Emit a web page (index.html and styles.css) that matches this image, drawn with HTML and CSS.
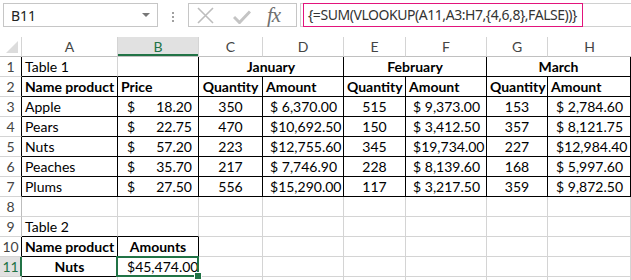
FILE: index.html
```html
<!DOCTYPE html>
<html lang="en">
<head>
    <meta charset="UTF-8">
    <title>VLOOKUP array formula</title>
    <link rel="stylesheet" href="styles.css">
</head>
<body>
    <div class="topbar">
        <div class="namebox"><span>B11</span><i class="caret"></i></div>
        <div class="dots"><i></i><i></i><i></i></div>
        <div class="fbtns">
            <svg class="ic-x" width="17" height="17" viewBox="0 0 17 17"><path d="M1 1L16 16M16 1L1 16" stroke="#bdbdbd" stroke-width="1.6" fill="none"/></svg>
            <svg class="ic-ok" width="18" height="14" viewBox="0 0 18 14"><path d="M1 7L6.5 12.5L17 1.5" stroke="#c4c4c4" stroke-width="3" fill="none"/></svg>
            <span class="fx">fx</span>
        </div>
        <div class="fbar">
            <div class="formula">{=SUM(VLOOKUP(A11,A3:H7,{4,6,8},FALSE))}</div>
        </div>
    </div>

    <table class="sheet">
        <colgroup>
            <col class="w-rh"><col class="w-a"><col class="w-b"><col class="w-c"><col class="w-d">
            <col class="w-e"><col class="w-f"><col class="w-g"><col class="w-h">
        </colgroup>
        <thead>
            <tr>
                <th class="corner"><i></i></th>
                <th>A</th><th class="on">B</th><th>C</th><th>D</th><th>E</th><th>F</th><th>G</th><th>H</th>
            </tr>
        </thead>
        <tbody>
            <tr>
                <th class="rh k">1</th>
                <td class="kb">Table 1</td><td class="k"></td>
                <td colspan="2" class="k bold mid">January</td>
                <td colspan="2" class="k bold mid">February</td>
                <td colspan="2" class="k bold mid">March</td>
            </tr>
            <tr>
                <th class="rh k">2</th>
                <td class="k bold">Name product</td><td class="k bold">Price</td>
                <td class="k bold mid">Quantity</td><td class="k bold">Amount</td>
                <td class="k bold mid">Quantity</td><td class="k bold">Amount</td>
                <td class="k bold mid">Quantity</td><td class="k bold">Amount</td>
            </tr>
            <tr>
                <th class="rh k">3</th>
                <td class="k">Apple</td>
                <td class="k acc pb"><div><span>$</span><span>18.20</span></div></td>
                <td class="k mid">350</td>
                <td class="k acc"><div><span>$</span><span>6,370.00</span></div></td>
                <td class="k mid">515</td>
                <td class="k acc"><div><span>$</span><span>9,373.00</span></div></td>
                <td class="k mid">153</td>
                <td class="k acc ph"><div><span>$</span><span>2,784.60</span></div></td>
            </tr>
            <tr>
                <th class="rh k">4</th>
                <td class="k">Pears</td>
                <td class="k acc pb"><div><span>$</span><span>22.75</span></div></td>
                <td class="k mid">470</td>
                <td class="k acc"><div><span>$</span><span>10,692.50</span></div></td>
                <td class="k mid">150</td>
                <td class="k acc"><div><span>$</span><span>3,412.50</span></div></td>
                <td class="k mid">357</td>
                <td class="k acc ph"><div><span>$</span><span>8,121.75</span></div></td>
            </tr>
            <tr>
                <th class="rh k">5</th>
                <td class="k">Nuts</td>
                <td class="k acc pb"><div><span>$</span><span>57.20</span></div></td>
                <td class="k mid">223</td>
                <td class="k acc"><div><span>$</span><span>12,755.60</span></div></td>
                <td class="k mid">345</td>
                <td class="k acc"><div><span>$</span><span>19,734.00</span></div></td>
                <td class="k mid">227</td>
                <td class="k acc ph"><div><span>$</span><span>12,984.40</span></div></td>
            </tr>
            <tr>
                <th class="rh k">6</th>
                <td class="k">Peaches</td>
                <td class="k acc pb"><div><span>$</span><span>35.70</span></div></td>
                <td class="k mid">217</td>
                <td class="k acc"><div><span>$</span><span>7,746.90</span></div></td>
                <td class="k mid">228</td>
                <td class="k acc"><div><span>$</span><span>8,139.60</span></div></td>
                <td class="k mid">168</td>
                <td class="k acc ph"><div><span>$</span><span>5,997.60</span></div></td>
            </tr>
            <tr>
                <th class="rh k">7</th>
                <td class="k">Plums</td>
                <td class="k acc pb"><div><span>$</span><span>27.50</span></div></td>
                <td class="k mid">556</td>
                <td class="k acc"><div><span>$</span><span>15,290.00</span></div></td>
                <td class="k mid">117</td>
                <td class="k acc"><div><span>$</span><span>3,217.50</span></div></td>
                <td class="k mid">359</td>
                <td class="k acc ph"><div><span>$</span><span>9,872.50</span></div></td>
            </tr>
            <tr>
                <th class="rh">8</th>
                <td></td><td></td><td></td><td></td><td></td><td></td><td></td><td></td>
            </tr>
            <tr>
                <th class="rh">9</th>
                <td class="kb">Table 2</td><td class="kb"></td><td></td><td></td><td></td><td></td><td></td><td></td>
            </tr>
            <tr>
                <th class="rh k">10</th>
                <td class="k bold">Name product</td><td class="k bold mid">Amounts</td>
                <td></td><td></td><td></td><td></td><td></td><td></td>
            </tr>
            <tr>
                <th class="rh on">11</th>
                <td class="k bold mid">Nuts</td>
                <td class="k acc pb sel"><div><span>$</span><span>45,474.00</span></div></td>
                <td></td><td></td><td></td><td></td><td></td><td></td>
            </tr>
            <tr>
                <th class="rh"></th>
                <td></td><td></td><td></td><td></td><td></td><td></td><td></td><td></td>
            </tr>
        </tbody>
    </table>
</body>
</html>
```

FILE: styles.css
```css
*{margin:0; padding:0; box-sizing:border-box;}
body{width:631px; height:280px; overflow:hidden; background:#fff;
     font-family:Lato, "Liberation Sans", sans-serif; color:#000;}

/* formula bar */
.topbar{display:flex; align-items:flex-start; height:37px; padding:3px 0 0 3px;}
.namebox{width:155px; height:24px; border:1px solid #c6c6c6;
         display:flex; align-items:center; justify-content:space-between;
         padding:0 7px 0 7px; font:14px "Noto Sans", sans-serif; color:#222;}
.namebox .caret{width:0; height:0; border-left:4px solid transparent;
                border-right:4px solid transparent; border-top:4px solid #777;}
.dots{width:30px; display:flex; flex-direction:column; align-items:center;
      gap:2px; padding-top:9px;}
.dots i{width:2px; height:2px; background:#a0a0a0;}
.fbtns{position:relative; width:109px; height:24px; border:1px solid #c6c6c6;
       display:flex; align-items:center;}
.fbtns .ic-x{margin-left:8px;}
.fbtns .ic-ok{margin-left:19px; margin-top:3px;}
.fbtns .fx{margin-left:16px; font:italic 21px "Liberation Serif", serif;
           color:#707070; letter-spacing:-1px; line-height:20px;}
.fbar{flex:1; height:24px; margin-left:3px; display:flex;
      border:1px solid #d0d0d0; border-right:none; padding-left:2px;}
.formula{width:280px; height:24px; margin-top:-1px; border:1px solid #e2147c;
         padding-left:4px; font:14px "Noto Sans", sans-serif; color:#333;
         line-height:21px; letter-spacing:-0.45px; white-space:nowrap;}

/* grid */
.sheet{border-collapse:separate; border-spacing:0; table-layout:fixed; width:631px;
       font-size:14px; font-variant-numeric:tabular-nums;}
.w-rh{width:22px;} .w-a{width:96px;} .w-b{width:81px;} .w-c{width:64px;}
.w-d{width:81px;} .w-e{width:62px;} .w-f{width:81px;} .w-g{width:61px;} .w-h{width:83px;}

.sheet th{height:20px; font-weight:normal; color:#444; line-height:19px;
          vertical-align:bottom; text-align:center;
          border-right:1px solid #d4d4d4; border-bottom:1px solid #c0c0c0;}
.sheet thead th:last-child{border-right:none;}
.sheet th.corner{position:relative;}
.sheet th.corner i{position:absolute; right:3px; bottom:3px; width:0; height:0;
                   border-left:12px solid transparent; border-bottom:12px solid #dcdcdc;}
.sheet thead th.on{background:#e1e1e1; color:#217346; box-shadow:inset 0 -2px 0 #217346;}
.sheet th.rh{border-bottom-color:#d4d4d4; border-right-color:#bdbdbd;}
.sheet th.rh.k{border-right-color:#000;}
.sheet th.rh.on{background:#e1e1e1; color:#217346; border-right-color:#217346;
                box-shadow:inset -1px 0 0 #217346;}

.sheet td{height:20px; padding:0 3px; line-height:19px; vertical-align:bottom;
          white-space:nowrap; overflow:hidden;
          border-right:1px solid #d4d4d4; border-bottom:1px solid #d4d4d4;}
.sheet td.k{border-right-color:#000; border-bottom-color:#000;}
.sheet td.kb{border-bottom-color:#000;}
.sheet td.bold{font-weight:bold;}
.sheet td.mid{text-align:center;}
.sheet td.acc{padding:0 6px 0 7px;}
.sheet td.acc.pb{padding:0 6px 0 9px;}
.sheet td.acc.ph{padding:0 7px 0 8px;}
.sheet td.acc div{display:flex; justify-content:space-between;}

.sheet td.sel{position:relative; overflow:visible;}
.sheet td.sel::after{content:""; position:absolute; left:-2px; top:-1px; right:-1px; bottom:-1px;
                     border:2px solid #217346;}
.sheet td.sel::before{content:""; position:absolute; right:-4px; bottom:-4px; width:6px; height:6px;
                      background:#217346; border:1px solid #fff; z-index:1;}
```
